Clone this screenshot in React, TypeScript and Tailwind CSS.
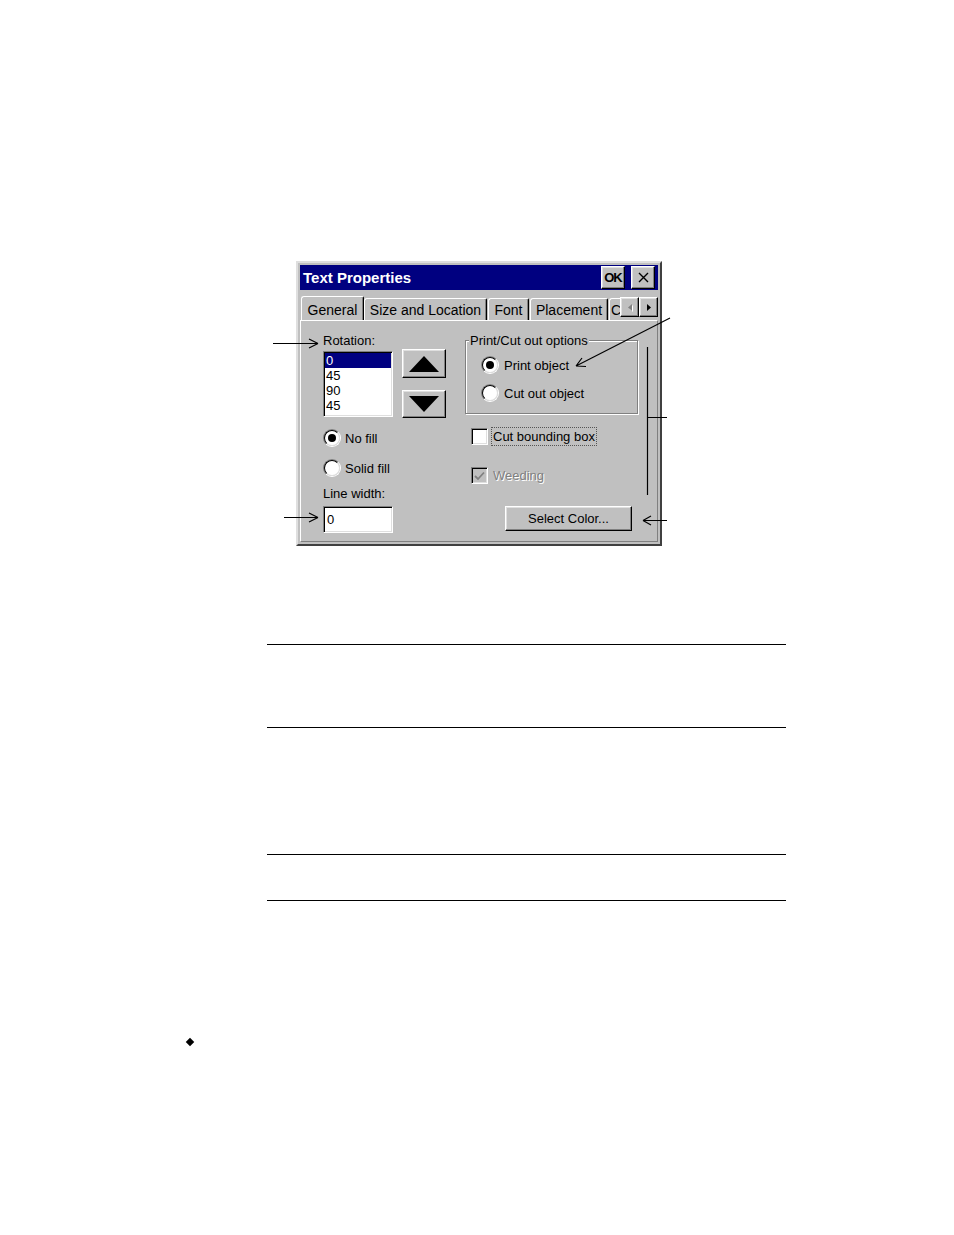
import React from "react";

const raised =
  "border border-t-white border-l-white border-r-black border-b-black shadow-[inset_-1px_-1px_0_#808080,inset_1px_1px_0_#dfdfdf] bg-[#c0c0c0]";
const sunken =
  "border border-t-[#808080] border-l-[#808080] border-r-white border-b-white shadow-[inset_1px_1px_0_#000,inset_-1px_-1px_0_#dfdfdf]";

function Radio({ checked }: { checked?: boolean }) {
  return (
    <div className="w-[18px] h-[18px] shrink-0 rounded-full border border-t-[#808080] border-l-[#808080] border-r-white border-b-white">
      <div className="w-full h-full rounded-full bg-white border-[1.5px] border-t-black border-l-black border-r-[#dfdfdf] border-b-[#dfdfdf] flex items-center justify-center">
        {checked && <div className="w-[8px] h-[8px] rounded-full bg-black" />}
      </div>
    </div>
  );
}

function Tab({ w, selected, children }: { w: number; selected?: boolean; children: React.ReactNode }) {
  if (selected) {
    return (
      <div
        style={{ width: w }}
        className="relative z-10 -mb-px h-[25px] shrink-0 bg-[#c0c0c0] border-t border-l border-white border-r border-r-black rounded-tl-[3px] rounded-tr-[2px] shadow-[inset_-1px_0_0_#808080] flex items-center justify-center text-[14px] leading-[16px] pt-[1px]"
      >
        {children}
      </div>
    );
  }
  return (
    <div
      style={{ width: w }}
      className="h-[22px] shrink-0 bg-[#c0c0c0] border-t border-l border-white border-r border-r-black rounded-tl-[3px] rounded-tr-[2px] shadow-[inset_-1px_0_0_#808080] flex items-center justify-center text-[14px] leading-[16px] whitespace-nowrap"
    >
      {children}
    </div>
  );
}

function Dialog() {
  return (
    <div className="w-[366px] h-[285px] bg-[#c0c0c0] border-2 border-t-[#dfdfdf] border-l-[#dfdfdf] border-r-[#404040] border-b-[#404040] p-[2px] flex flex-col text-black">
      {/* Title bar */}
      <div className="h-[25px] shrink-0 bg-[#000080] flex items-center pl-[3px] pr-[3px]">
        <span className="flex-1 text-white font-bold text-[15px] leading-[18px]">Text Properties</span>
        <div className={`${raised} w-[24px] h-[23px] flex items-center justify-center font-bold text-[13px] leading-[15px] tracking-[-1px]`}>
          OK
        </div>
        <div className={`${raised} ml-[6px] w-[24px] h-[23px] flex items-center justify-center`}>
          <svg width="11" height="11" viewBox="0 0 11 11">
            <path d="M1 1 L10 10 M10 1 L1 10" stroke="#000" strokeWidth="1.4" />
          </svg>
        </div>
      </div>

      {/* Tab strip */}
      <div className="h-[30px] shrink-0 flex items-end">
        <div className="flex-1 h-full flex items-end overflow-hidden pl-[1px]">
          <Tab w={63} selected>General</Tab>
          <Tab w={123}>Size and Location</Tab>
          <div className="ml-[1px]" />
          <Tab w={41}>Font</Tab>
          <div className="ml-[1px]" />
          <Tab w={78}>Placement</Tab>
          <div className="ml-[1px]" />
          <div className="h-[22px] w-[14px] shrink-0 border-t border-l border-white rounded-tl-[3px] text-[14px] leading-[16px] flex items-center pl-[1px]">
            C
          </div>
        </div>
        <div className="flex mb-[3px] shrink-0">
          <div className={`${raised} w-[19px] h-[20px] flex items-center justify-center`}>
            <svg width="6" height="9" viewBox="0 0 6 9">
              <path d="M5 1 L1 4.5 L5 8 Z" fill="#fff" transform="translate(1 1)" />
              <path d="M5 1 L1 4.5 L5 8 Z" fill="#808080" />
            </svg>
          </div>
          <div className={`${raised} w-[19px] h-[20px] flex items-center justify-center`}>
            <svg width="6" height="9" viewBox="0 0 6 9">
              <path d="M1 1 L5 4.5 L1 8 Z" fill="#000" />
            </svg>
          </div>
        </div>
      </div>

      {/* Panel */}
      <div className="flex-1 border-t border-l border-white border-r border-r-[#808080] border-b border-b-[#808080] flex pl-[22px] text-[13px] leading-[15px]">
        {/* Left column */}
        <div className="w-[123px] shrink-0 flex flex-col">
          <div className="mt-[12px]">Rotation:</div>
          <div className="mt-[1px] flex">
            <div className={`${sunken} mt-[2px] w-[70px] h-[66px] bg-white p-[1px] flex flex-col`}>
              <div className="bg-[#000080] text-white pl-[1px] h-[15px]">0</div>
              <div className="pl-[1px] h-[15px]">45</div>
              <div className="pl-[1px] h-[15px]">90</div>
              <div className="pl-[1px] h-[15px]">45</div>
            </div>
            <div className="ml-[9px] flex flex-col">
              <div className={`${raised} w-[44px] h-[29px] flex items-center justify-center`}>
                <svg width="32" height="18" viewBox="0 0 32 18">
                  <path d="M16 1 L31 17 L1 17 Z" fill="#000" />
                </svg>
              </div>
              <div className={`${raised} mt-[12px] w-[44px] h-[28px] flex items-center justify-center`}>
                <svg width="32" height="18" viewBox="0 0 32 18">
                  <path d="M1 1 L31 1 L16 17 Z" fill="#000" />
                </svg>
              </div>
            </div>
          </div>
          <div className="mt-[11px] flex items-center gap-[4px] h-[18px]">
            <Radio checked />
            <span>No fill</span>
          </div>
          <div className="mt-[12px] flex items-center gap-[4px] h-[18px]">
            <Radio />
            <span>Solid fill</span>
          </div>
          <div className="mt-[9px]">Line width:</div>
          <div className={`${sunken} mt-[5px] w-[70px] h-[27px] bg-white pl-[3px] flex items-center`}>0</div>
        </div>

        {/* Right column */}
        <div className="ml-[19px] flex flex-col">
          <div className="relative mt-[19px] w-[173px] h-[74px] border border-[#808080] shadow-[inset_1px_1px_0_#fff,1px_1px_0_#fff] pt-[15px] pl-[15px] flex flex-col">
            <span className="absolute -top-[8px] left-[3px] px-[1px] bg-[#c0c0c0]">Print/Cut out options</span>
            <div className="flex items-center gap-[5px] h-[18px]">
              <Radio checked />
              <span>Print object</span>
            </div>
            <div className="mt-[10px] flex items-center gap-[5px] h-[18px]">
              <Radio />
              <span>Cut out object</span>
            </div>
          </div>
          <div className="mt-[14px] ml-[6px] flex items-center h-[17px]">
            <div className={`${sunken} w-[17px] h-[17px] bg-white shrink-0`} />
            <span className="ml-[4px] px-[1px] outline outline-1 outline-dotted outline-[#555] leading-[17px]">
              Cut bounding box
            </span>
          </div>
          <div className="mt-[22px] ml-[6px] flex items-center h-[17px]">
            <div className={`${sunken} w-[17px] h-[17px] bg-[#c0c0c0] shrink-0 flex items-center justify-center`}>
              <svg width="11" height="10" viewBox="0 0 11 10">
                <path d="M1 5 L4 8 L10 1.5" stroke="#808080" strokeWidth="1.8" fill="none" />
              </svg>
            </div>
            <span className="ml-[5px] text-[#808080] [text-shadow:1px_1px_0_#fff]">Weeding</span>
          </div>
          <div className={`${raised} mt-[22px] ml-[40px] w-[127px] h-[25px] flex items-center justify-center`}>
            Select Color...
          </div>
        </div>
      </div>
    </div>
  );
}

function Annotations() {
  return (
    <svg className="absolute inset-0 pointer-events-none" width="954" height="1235" viewBox="0 0 954 1235">
      <g stroke="#000" strokeWidth="1.2" fill="none">
        <path d="M273 343.5 L318 343.5 M318 343.5 L309 339 M318 343.5 L309 348" />
        <path d="M284 517.5 L318 517.5 M318 517.5 L309 513 M318 517.5 L309 522" />
        <path d="M670 318 L576 366 M576 366 L582 358 M576 366 L586 366.5" />
        <path d="M647.5 347 L647.5 495 M647.5 417.5 L667 417.5" />
        <path d="M667 520.5 L643 520.5 M643 520.5 L651 516 M643 520.5 L651 525" />
      </g>
    </svg>
  );
}

export default function App() {
  return (
    <div className="relative w-[954px] h-[1235px] bg-white overflow-hidden font-['Liberation_Sans',Arial,sans-serif]">
      <div className="pt-[261px] pl-[296px]">
        <Dialog />
      </div>
      <div className="ml-[267px] w-[519px] mt-[98px]">
        <div className="h-[83px] border-t border-black" />
        <div className="h-[127px] border-t border-black" />
        <div className="h-[46px] border-t border-black" />
        <div className="border-t border-black" />
      </div>
      <div className="ml-[187px] mt-[138px] w-[6px] h-[6px] bg-black rotate-45" />
      <Annotations />
    </div>
  );
}
